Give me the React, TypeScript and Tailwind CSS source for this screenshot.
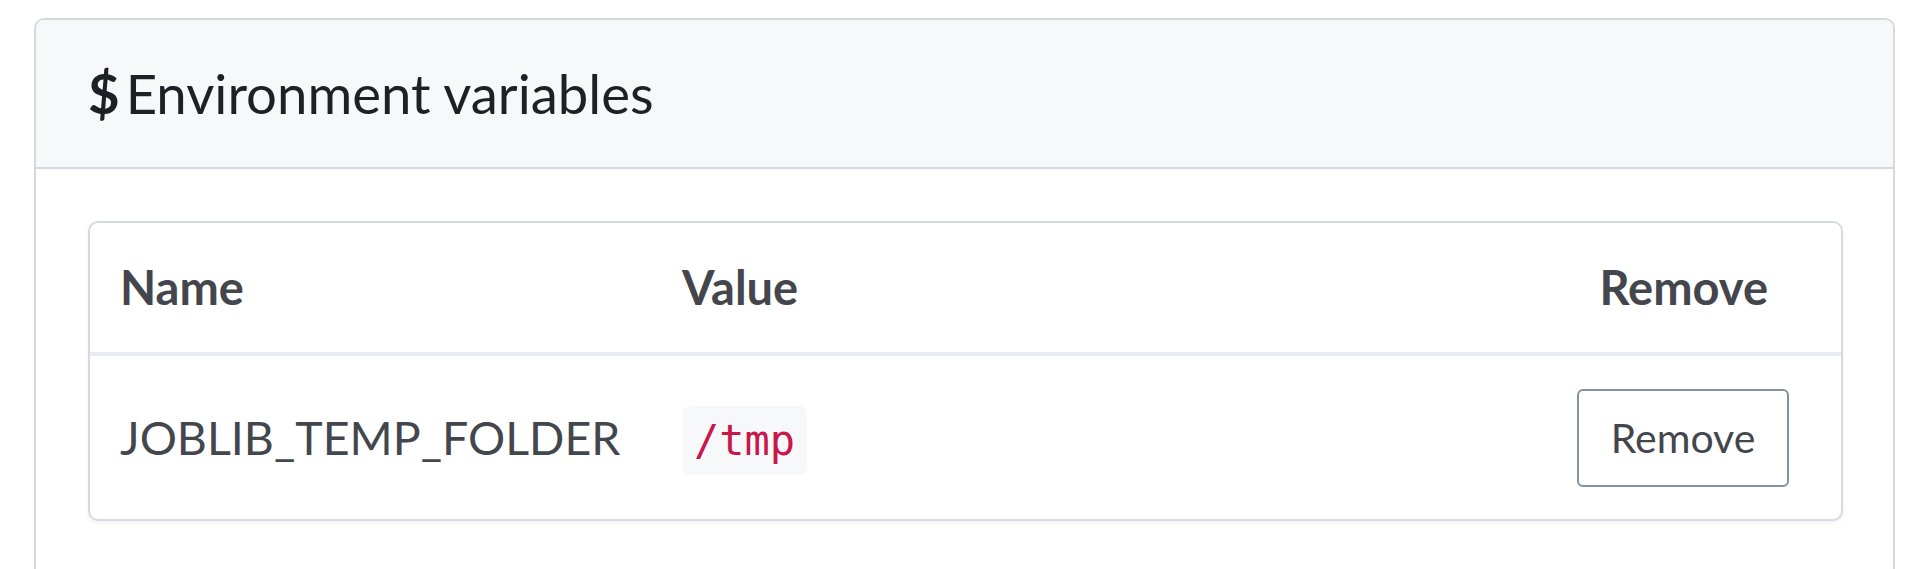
export default function App() {
  return (
    <div className="h-[569px] overflow-hidden bg-white pl-[34px] pr-[25px] pt-[18px] font-['Lato',sans-serif]">
      <div className="h-[600px] rounded-t-[10px] border-2 border-[#d4d9df] bg-white">
        <div className="flex h-[149px] items-center rounded-t-[8px] border-b-2 border-[#d4d9df] bg-[#f7f8fa] pl-[52px]">
          <h3 className="text-[54.5px] leading-none text-[#1d2125]">
            <span className="font-bold">$</span>
            <span className="ml-[6px]">Environment variables</span>
          </h3>
        </div>
        <div className="pl-[52px] pr-[50px] pt-[52px]">
          <div className="rounded-[10px] border-2 border-[#d6dbe0] shadow-[0_2px_4px_rgba(0,0,0,0.06)]">
            <div className="flex h-[133px] items-center border-b-4 border-[#e8ebf0] pl-[30px] pr-[73px] text-[47px] font-bold text-[#43474d]">
              <div className="w-[562px]">Name</div>
              <div className="flex-1">Value</div>
              <div>Remove</div>
            </div>
            <div className="flex h-[163px] items-center pl-[30px] pr-[52px] text-[46.5px] text-[#43474d]">
              <div className="w-[562px]">JOBLIB_TEMP_FOLDER</div>
              <div className="flex-1">
                <code className="rounded-[8px] bg-[#f7f8fa] px-[12px] py-[10px] font-['DejaVu_Sans_Mono',monospace] text-[42px] text-[#c8174a]">
                  /tmp
                </code>
              </div>
              <button className="h-[98px] w-[212px] rounded-[6px] border-2 border-[#8592a0] bg-white text-[41px] text-[#43474d]">
                Remove
              </button>
            </div>
          </div>
        </div>
      </div>
    </div>
  );
}
